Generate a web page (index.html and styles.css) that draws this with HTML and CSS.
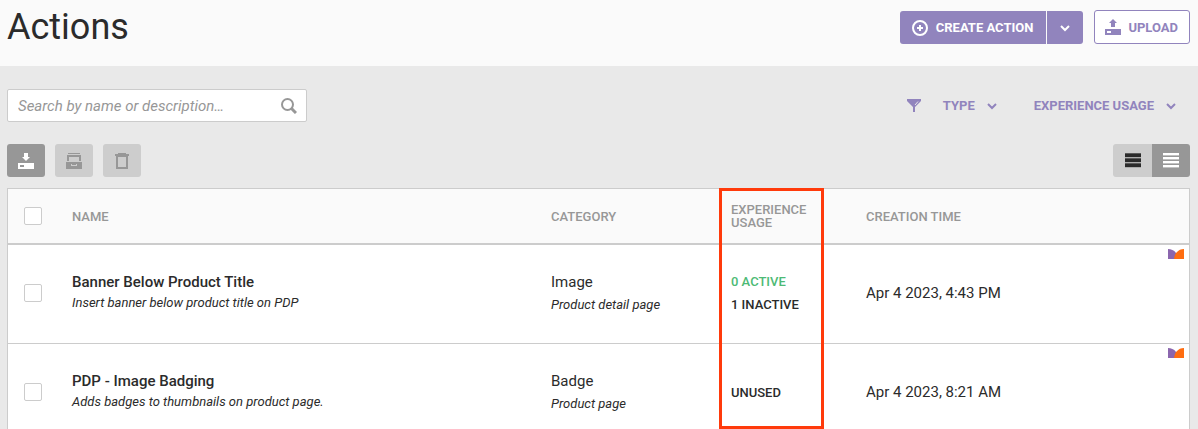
FILE: index.html
```html
<!DOCTYPE html>
<html lang="en">
<head>
  <meta charset="UTF-8">
  <meta name="viewport" content="width=device-width, initial-scale=1.0">
  <title>Actions</title>
  <link rel="stylesheet" href="styles.css">
</head>
<body>

  <!-- Page header -->
  <header class="page-header">
    <h1>Actions</h1>
    <div class="header-buttons">
      <div class="split-button">
        <button type="button" class="btn-create">
          <svg width="16" height="16" viewBox="0 0 16 16" fill="none" stroke="currentColor" stroke-width="2"><circle cx="8" cy="8" r="7"/><path d="M8 5v6M5 8h6"/></svg>
          Create action
        </button>
        <button type="button" class="btn-more" aria-label="More create options">
          <svg width="10" height="8" viewBox="0 0 10 8" fill="none" stroke="currentColor" stroke-width="2"><path d="M1 2l4 4 4-4"/></svg>
        </button>
      </div>
      <button type="button" class="btn-upload">
        <svg width="16" height="16" viewBox="0 0 16 16" fill="currentColor"><path d="M8 0l4 4h-2v4H6V4H4z"/><path fill-rule="evenodd" d="M0 10h16v6H0zM2 12v2h4v-2z"/></svg>
        Upload
      </button>
    </div>
  </header>

  <main class="content">

    <!-- Search and filters -->
    <div class="filter-bar">
      <form class="search" role="search">
        <input type="text" placeholder="Search by name or description…" aria-label="Search by name or description">
        <button type="button" aria-label="Search">
          <svg width="16" height="16" viewBox="0 0 16 16" fill="none" stroke="currentColor" stroke-width="2"><circle cx="6.500" cy="6.500" r="5.500"/><path d="M10.500 10.500l4.500 4.500" stroke-width="3"/></svg>
        </button>
      </form>
      <div class="filters">
        <svg class="funnel" width="14" height="13" viewBox="0 0 14 13"><path fill="currentColor" d="M0 0h14v2L8 8v5H6V8L0 2z"/><path d="M11 2.500L8 6" fill="none" stroke="#e9e9e9"/></svg>
        <button type="button" class="filter filter-type" aria-haspopup="true">
          Type
          <svg width="10" height="8" viewBox="0 0 10 8" fill="none" stroke="currentColor" stroke-width="2"><path d="M1 2l4 4 4-4"/></svg>
        </button>
        <button type="button" class="filter" aria-haspopup="true">
          Experience usage
          <svg width="10" height="8" viewBox="0 0 10 8" fill="none" stroke="currentColor" stroke-width="2"><path d="M1 2l4 4 4-4"/></svg>
        </button>
      </div>
    </div>

    <!-- Bulk actions and view switch -->
    <div class="toolbar">
      <div class="bulk-actions">
        <button type="button" class="tool active" aria-label="Download">
          <svg width="16" height="16" viewBox="0 0 16 16" fill="currentColor"><path d="M6 0h4v4h2L8 8 4 4h2z"/><path fill-rule="evenodd" d="M0 10h16v6H0zM2 12v2h4v-2z"/></svg>
        </button>
        <button type="button" class="tool" aria-label="Archive" disabled>
          <svg width="16" height="16" viewBox="0 0 16 16" fill="currentColor"><path d="M2 0h12v1H2z"/><path d="M1 2h14v6h-2V4H3v4H1z"/><path fill-rule="evenodd" d="M0 9h16v7H0zM5 11v2h6v-2h-1v1H6v-1z"/></svg>
        </button>
        <button type="button" class="tool" aria-label="Delete" disabled>
          <svg width="14" height="16" viewBox="0 0 14 16" fill="currentColor"><path d="M3 0h8v1h3v2H0V1h3z"/><path fill-rule="evenodd" d="M1 3h12v13H1zM3 4v10h8V4z"/></svg>
        </button>
      </div>
      <div class="view-switch">
        <button type="button" class="tool view-large" aria-label="Comfortable rows">
          <svg width="16" height="15" viewBox="0 0 16 15" fill="currentColor"><path d="M0 1h16v3H0zM0 6h16v3H0zM0 11h16v3H0z"/><path opacity=".7" d="M0 0h16v1H0zM0 5h16v1H0zM0 10h16v1H0z"/><path opacity=".2" d="M0 4h16v1H0zM0 9h16v1H0zM0 14h16v1H0z"/></svg>
        </button>
        <button type="button" class="tool active" aria-label="Compact rows">
          <svg width="16" height="15" viewBox="0 0 16 15" fill="currentColor"><path d="M0 0h16v2H0zM0 4h16v2H0zM0 8h16v2H0zM0 12h16v2H0z"/><path opacity=".4" d="M0 2h16v1H0zM0 6h16v1H0zM0 10h16v1H0zM0 14h16v1H0z"/></svg>
        </button>
      </div>
    </div>

    <table class="actions-table">
      <thead>
        <tr>
          <th class="col-check"><input type="checkbox" aria-label="Select all"></th>
          <th>Name</th>
          <th class="col-category">Category</th>
          <th class="col-usage">Experience usage<span class="highlight"></span></th>
          <th class="col-created">Creation time</th>
        </tr>
      </thead>
      <tbody>
        <tr>
          <td><input type="checkbox" aria-label="Select Banner Below Product Title"></td>
          <td>
            <div class="name">Banner Below Product Title</div>
            <div class="description">Insert banner below product title on PDP</div>
          </td>
          <td>
            <div class="category">Image</div>
            <div class="page-type">Product detail page</div>
          </td>
          <td class="usage">
            <div class="usage-active">0 Active</div>
            <div>1 Inactive</div>
          </td>
          <td class="created">
            Apr 4 2023, 4:43 PM
            <svg class="brand" width="16" height="10" viewBox="0 0 16 10"><path fill="#8b66ae" d="M0 0c3 0 6 1 8 4v6H0z"/><path fill="#ff6d10" d="M16 0c-3 0-5.500 1-7.500 3.500C7 5 6.500 7 6 10h10z"/></svg>
          </td>
        </tr>
        <tr>
          <td><input type="checkbox" aria-label="Select PDP - Image Badging"></td>
          <td>
            <div class="name">PDP - Image Badging</div>
            <div class="description">Adds badges to thumbnails on product page.</div>
          </td>
          <td>
            <div class="category">Badge</div>
            <div class="page-type">Product page</div>
          </td>
          <td class="usage">
            <div>Unused</div>
          </td>
          <td class="created">
            Apr 4 2023, 8:21 AM
            <svg class="brand" width="16" height="10" viewBox="0 0 16 10"><path fill="#8b66ae" d="M0 0c3 0 6 1 8 4v6H0z"/><path fill="#ff6d10" d="M16 0c-3 0-5.500 1-7.500 3.500C7 5 6.500 7 6 10h10z"/></svg>
          </td>
        </tr>
      </tbody>
    </table>

  </main>

</body>
</html>
```
FILE: styles.css
```css
* {
  box-sizing: border-box;
}
body {
  margin: 0;
  background-color: #e9e9e9;
  color: #2b2b2b;
  font-family: Roboto, "Liberation Sans", sans-serif;
  font-size: 15px;
}
button {
  display: flex;
  align-items: center;
  justify-content: center;
  margin: 0;
  padding: 0;
  border: none;
  background: none;
  font-family: inherit;
  font-size: 13px;
  cursor: pointer;
}
svg {
  display: block;
  flex-shrink: 0;
}

/* Header */
.page-header {
  display: flex;
  justify-content: space-between;
  align-items: flex-start;
  padding: 6px 8px 18px 7px;
  background-color: #fafafa;
}
h1 {
  margin: 0;
  font-size: 36px;
  font-weight: 400;
  line-height: 42px;
}
.header-buttons {
  display: flex;
  gap: 11px;
  padding-top: 4px;
}
.split-button {
  display: flex;
  gap: 1px;
  padding-top: 1px;
}
.btn-create,
.btn-more {
  height: 33px;
  background-color: #9184bd;
  color: #fff;
}
.btn-create {
  gap: 8px;
  padding: 0 13px 0 12px;
  border-radius: 3px 0 0 3px;
  font-weight: 700;
  text-transform: uppercase;
}
.btn-more {
  width: 36px;
  border-radius: 0 3px 3px 0;
}
.btn-upload {
  gap: 7px;
  height: 34px;
  padding: 0 11px 0 10px;
  border: 1px solid #9184bd;
  border-radius: 3px;
  background-color: #fff;
  color: #9184bd;
  font-weight: 700;
  text-transform: uppercase;
}

/* Search and filters */
.content {
  padding: 23px 8px 0 7px;
}
.filter-bar,
.toolbar {
  display: flex;
  justify-content: space-between;
  align-items: center;
}
.search {
  display: flex;
  width: 300px;
  height: 33px;
  border: 1px solid #ccc;
  border-radius: 2px;
  background-color: #fff;
}
.search input {
  flex: 1;
  min-width: 0;
  padding: 0 0 0 10px;
  border: none;
  outline: none;
  background: none;
  font-family: inherit;
  font-size: 15px;
}
.search input::placeholder {
  color: #979797;
  font-style: italic;
}
.search button {
  width: 34px;
  color: #979797;
}
.filters {
  display: flex;
  align-items: center;
  padding-right: 14px;
  color: #9184bd;
}
.filter {
  gap: 12px;
  color: #9184bd;
  font-weight: 700;
  text-transform: uppercase;
}
.filter-type {
  margin: 0 37px 0 22px;
}

/* Toolbar */
.toolbar {
  padding: 22px 0 11px;
}
.bulk-actions {
  display: flex;
  gap: 10px;
}
.view-switch {
  display: flex;
  overflow: hidden;
  border-radius: 3px;
}
.tool {
  width: 38px;
  height: 33px;
  border-radius: 3px;
  background-color: #cdcdcd;
  color: #979797;
}
.tool.active {
  background-color: #979797;
  color: #fff;
}
.view-switch .tool {
  border-radius: 0;
}
.view-switch .view-large {
  width: 39px;
  color: #2b2b2b;
}

/* Table */
.actions-table {
  width: 100%;
  border: 1px solid #ccc;
  border-spacing: 0;
  table-layout: fixed;
  background-color: #fff;
}
th {
  position: relative;
  height: 56px;
  padding: 0 0 0 12px;
  border-bottom: 2px solid #ccc;
  background-color: #fafafa;
  color: #979797;
  font-size: 13px;
  font-weight: 500;
  line-height: 13px;
  text-align: left;
  text-transform: uppercase;
}
td {
  position: relative;
  height: 99px;
  padding: 0 0 2px 12px;
  border-bottom: 1px solid #ccc;
}
.col-check {
  width: 52px;
}
.col-category {
  width: 180px;
}
.col-usage {
  width: 135px;
  padding-right: 30px;
}
.col-created {
  width: 335px;
}
input[type="checkbox"] {
  display: block;
  appearance: none;
  width: 18px;
  height: 18px;
  margin: 0 0 0 4px;
  border: 1px solid #ccc;
  border-radius: 2px;
  background-color: #fff;
}
.name {
  font-weight: 500;
  line-height: 20px;
}
.description,
.page-type {
  font-size: 13px;
  font-style: italic;
  line-height: 22px;
}
.category {
  line-height: 24px;
}
.usage {
  font-size: 13px;
  font-weight: 500;
  line-height: 23px;
  text-transform: uppercase;
}
.usage-active {
  color: #4dba75;
}
.brand {
  position: absolute;
  top: 4px;
  right: 5px;
}
/* Frame over the usage column */
.highlight {
  position: absolute;
  top: -1px;
  left: 0;
  z-index: 1;
  width: 105px;
  height: 241px;
  border: 3px solid #ff3a0b;
}
```
